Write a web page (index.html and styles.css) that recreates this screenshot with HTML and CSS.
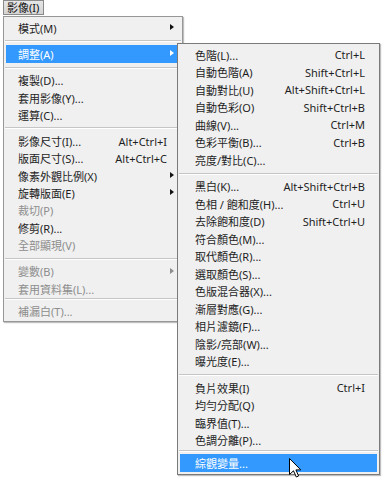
FILE: index.html
```html
<!DOCTYPE html>
<html lang="zh-Hant">
<head>
    <meta charset="UTF-8">
    <meta name="viewport" content="width=device-width, initial-scale=1.0">
    <title>影像 - 調整</title>
    <link rel="stylesheet" href="styles.css">
</head>
<body>
    <div class="screen">
        <div class="menubar">
            <span class="menubar-item">影像(I)</span>
        </div>

        <div class="menu main-menu">
            <div class="item has-sub"><span class="label">模式(M)</span></div>
            <div class="sep"></div>
            <div class="item has-sub active"><span class="label">調整(A)</span></div>
            <div class="sep"></div>
            <div class="item"><span class="label">複製(D)...</span></div>
            <div class="item"><span class="label">套用影像(Y)...</span></div>
            <div class="item"><span class="label">運算(C)...</span></div>
            <div class="sep"></div>
            <div class="item"><span class="label">影像尺寸(I)...</span><span class="key">Alt+Ctrl+I</span></div>
            <div class="item"><span class="label">版面尺寸(S)...</span><span class="key">Alt+Ctrl+C</span></div>
            <div class="item has-sub"><span class="label">像素外觀比例(X)</span></div>
            <div class="item has-sub"><span class="label">旋轉版面(E)</span></div>
            <div class="item disabled"><span class="label">裁切(P)</span></div>
            <div class="item"><span class="label">修剪(R)...</span></div>
            <div class="item disabled"><span class="label">全部顯現(V)</span></div>
            <div class="sep"></div>
            <div class="item has-sub disabled"><span class="label">變數(B)</span></div>
            <div class="item disabled"><span class="label">套用資料集(L)...</span></div>
            <div class="sep tight"></div>
            <div class="item disabled"><span class="label">補漏白(T)...</span></div>
        </div>

        <div class="menu sub-menu">
            <div class="item"><span class="label">色階(L)...</span><span class="key">Ctrl+L</span></div>
            <div class="item"><span class="label">自動色階(A)</span><span class="key">Shift+Ctrl+L</span></div>
            <div class="item"><span class="label">自動對比(U)</span><span class="key">Alt+Shift+Ctrl+L</span></div>
            <div class="item"><span class="label">自動色彩(O)</span><span class="key">Shift+Ctrl+B</span></div>
            <div class="item"><span class="label">曲線(V)...</span><span class="key">Ctrl+M</span></div>
            <div class="item"><span class="label">色彩平衡(B)...</span><span class="key">Ctrl+B</span></div>
            <div class="item"><span class="label">亮度/對比(C)...</span></div>
            <div class="sep"></div>
            <div class="item"><span class="label">黑白(K)...</span><span class="key">Alt+Shift+Ctrl+B</span></div>
            <div class="item"><span class="label">色相 / 飽和度(H)...</span><span class="key">Ctrl+U</span></div>
            <div class="item"><span class="label">去除飽和度(D)</span><span class="key">Shift+Ctrl+U</span></div>
            <div class="item"><span class="label">符合顏色(M)...</span></div>
            <div class="item"><span class="label">取代顏色(R)...</span></div>
            <div class="item"><span class="label">選取顏色(S)...</span></div>
            <div class="item"><span class="label">色版混合器(X)...</span></div>
            <div class="item"><span class="label">漸層對應(G)...</span></div>
            <div class="item"><span class="label">相片濾鏡(F)...</span></div>
            <div class="item"><span class="label">陰影/亮部(W)...</span></div>
            <div class="item"><span class="label">曝光度(E)...</span></div>
            <div class="sep"></div>
            <div class="item"><span class="label">負片效果(I)</span><span class="key">Ctrl+I</span></div>
            <div class="item"><span class="label">均勻分配(Q)</span></div>
            <div class="item"><span class="label">臨界值(T)...</span></div>
            <div class="item"><span class="label">色調分離(P)...</span></div>
            <div class="sep tight"></div>
            <div class="item active"><span class="label">綜觀變量...</span></div>
        </div>

        <svg class="cursor" width="13" height="20" viewBox="0 0 13 20">
            <path d="M0.5 0.5 L0.5 16.5 L4.5 12.8 L7.3 19 L9.6 18 L6.9 11.9 L11.8 11.9 Z" fill="#fff" stroke="#000" stroke-width="1" stroke-linejoin="miter"/>
        </svg>
    </div>
</body>
</html>
```

FILE: styles.css
```css
body {
    margin: 0;
    padding: 0;
    background: #fff;
    font-family: "Noto Sans", "Noto Sans CJK TC", sans-serif;
    font-size: 11px;
    color: #1e1e1e;
}
.screen {
    position: relative;
    width: 384px;
    height: 479px;
    overflow: hidden;
}
.menubar {
    padding: 0 0 0 3px;
    height: 16px;
}
.menubar-item {
    display: inline-block;
    box-sizing: border-box;
    height: 15px;
    line-height: 13px;
    padding: 0 4px 0 3px;
    border: 1px solid #8a8a8a;
    background: linear-gradient(#e6e6e6, #d4d4d4);
    color: #111;
}
.menu {
    position: absolute;
    box-sizing: border-box;
    background: #f0f0f0;
    border: 1px solid #979797;
    box-shadow: 1px 1px 1px rgba(0, 0, 0, 0.25);
    padding: 2px 0;
}
.main-menu {
    left: 3px;
    top: 16px;
    width: 180px;
}
.sub-menu {
    left: 177px;
    top: 43px;
    width: 203px;
    border-color: #7a7a7a;
}
.item {
    position: relative;
    display: flex;
    align-items: center;
    height: 17.3px;
    margin: 0 2px;
    white-space: nowrap;
}
.main-menu .item {
    padding: 0 13px 0 12px;
}
.sub-menu .item {
    height: 17.5px;
    padding: 0 12px 0 15px;
}
.label {
    flex: 1;
}
.key {
    text-align: right;
}
.disabled {
    color: #8d8d8d;
}
.active {
    background: #3399ff;
    color: #fff;
}
.has-sub::after {
    content: "";
    position: absolute;
    right: 6px;
    top: 5px;
    border-left: 4px solid #111;
    border-top: 3.5px solid transparent;
    border-bottom: 3.5px solid transparent;
}
.has-sub.disabled::after {
    border-left-color: #8d8d8d;
}
.has-sub.active::after {
    border-left-color: #fff;
}
.sep {
    height: 4px;
    margin: 0 1px 4px;
    border-bottom: 1px solid #c5c5c5;
    box-shadow: 0 1px 0 #fff;
}
.sep.tight {
    height: 1px;
    margin-bottom: 3px;
}
.cursor {
    position: absolute;
    left: 289px;
    top: 458px;
}
```
